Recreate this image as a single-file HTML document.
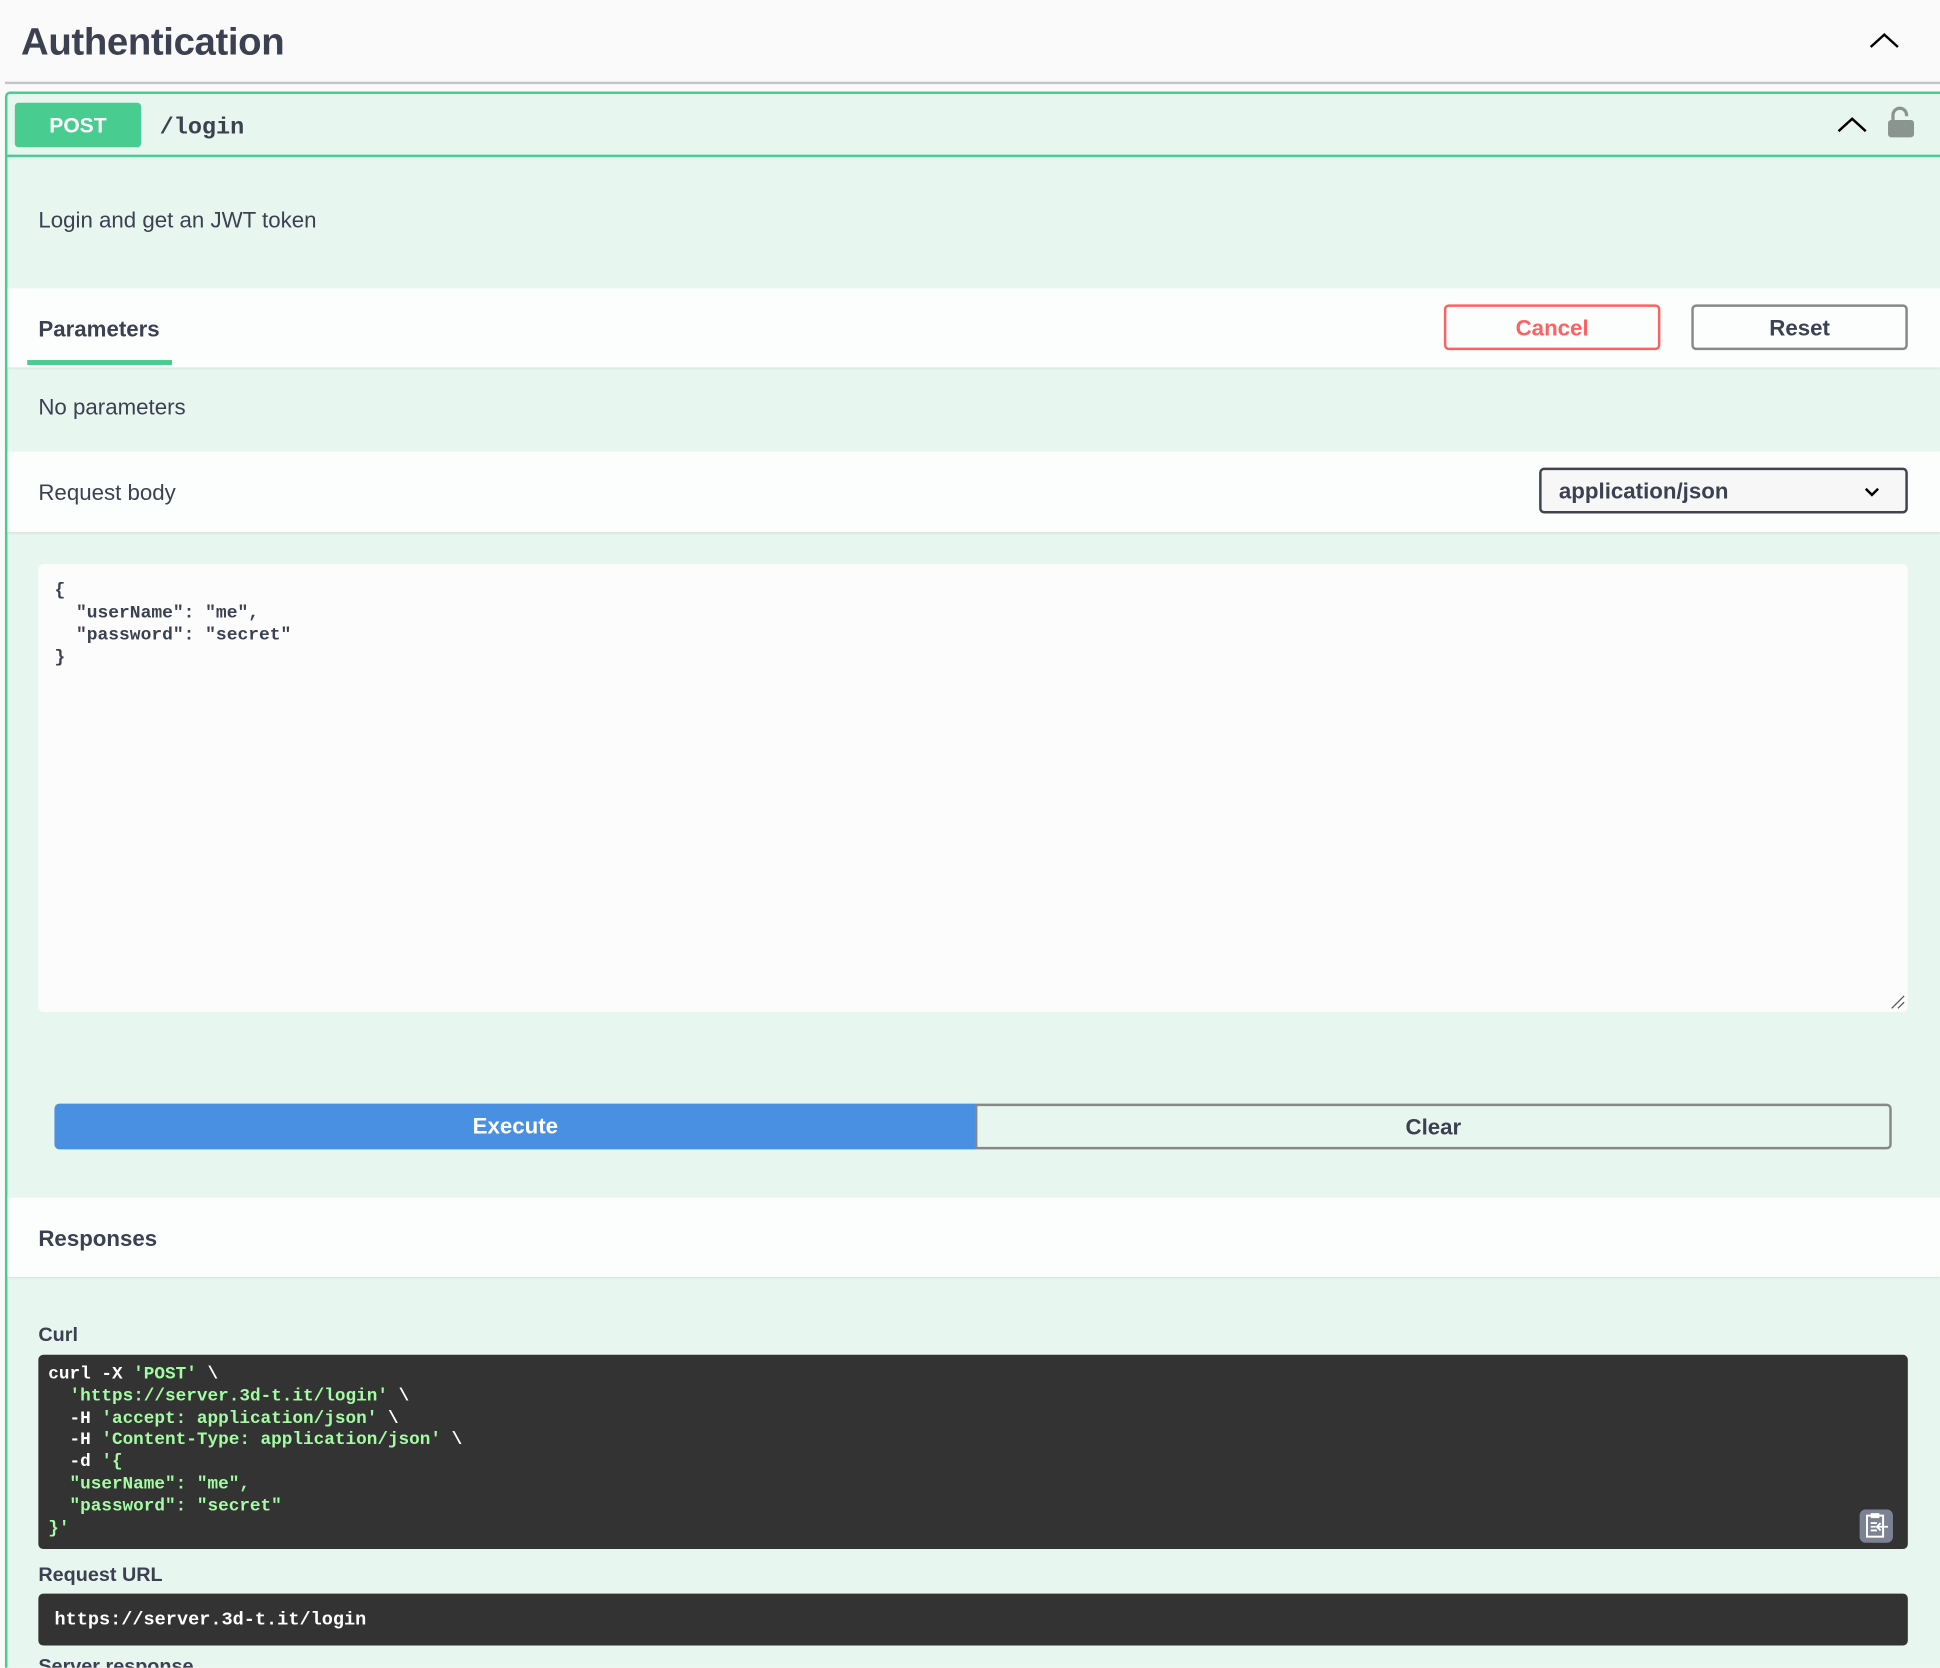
<!DOCTYPE html>
<html><head><meta charset="utf-8"><style>
html,body{margin:0;padding:0;width:1940px;height:1668px;overflow:hidden;background:#fafafa}
#w{position:absolute;left:0;top:0;width:1568px;height:1348px;overflow:hidden;transform:scale(1.23724);transform-origin:0 0;font-family:"Liberation Sans",sans-serif;color:#3b4151}
.a{position:absolute}
.mono{font-family:"Liberation Mono",monospace;font-weight:bold}
</style></head><body><div id="w">
<div class="a" style="left:17px;top:16px;font-size:31px;font-weight:bold;letter-spacing:-0.3px">Authentication</div>
<svg class="a" style="left:1510px;top:25px" width="26" height="16" viewBox="0 0 26 16"><path d="M2 13 L13 3 L24 13" fill="none" stroke="#000" stroke-width="2"/></svg>
<div class="a" style="left:4px;top:66px;width:1564px;height:2px;background:#c6c6ca"></div>

<div class="a" style="left:4px;top:74px;width:1570px;height:1400px;background:#e8f6f0;border:2px solid #49cc90;border-radius:4px;box-sizing:border-box"></div>
<div class="a" style="left:6px;top:125px;width:1562px;height:2px;background:#49cc90"></div>
<div class="a" style="left:12px;top:83px;width:102px;height:36px;background:#49cc90;border-radius:3px;color:#fff;font-weight:bold;font-size:17px;text-align:center;line-height:37px">POST</div>
<div class="a mono" style="left:129px;top:92px;font-size:19px">/login</div>
<svg class="a" style="left:1484px;top:92px" width="26" height="16" viewBox="0 0 26 16"><path d="M2 14 L13 4 L24 14" fill="none" stroke="#000" stroke-width="2"/></svg>
<svg class="a" style="left:1524px;top:86px" width="24" height="26" viewBox="0 0 24 26"><path d="M6 12 V7 a5.5 5.5 0 0 1 11 0 V8" fill="none" stroke="#8b9590" stroke-width="2.6"/><rect x="2" y="11" width="21" height="14" rx="2.5" fill="#8b9590"/></svg>

<div class="a" style="left:31px;top:168px;font-size:18px">Login and get an JWT token</div>

<div class="a" style="left:6px;top:233px;width:1562px;height:64px;background:rgba(255,255,255,.85);box-shadow:0 1px 2px rgba(0,0,0,.1)"></div>
<div class="a" style="left:31px;top:256px;font-size:18px;font-weight:bold">Parameters</div>
<div class="a" style="left:22px;top:291px;width:117px;height:4px;background:#49cc90"></div>
<div class="a" style="left:1167px;top:246px;width:175px;height:37px;border:2px solid #ff6060;border-radius:4px;box-sizing:border-box;color:#ff6060;font-weight:bold;font-size:18px;text-align:center;line-height:35px">Cancel</div>
<div class="a" style="left:1367px;top:246px;width:175px;height:37px;border:2px solid #888;border-radius:4px;box-sizing:border-box;font-weight:bold;font-size:18px;text-align:center;line-height:35px">Reset</div>

<div class="a" style="left:31px;top:319px;font-size:18px">No parameters</div>

<div class="a" style="left:6px;top:365px;width:1562px;height:65px;background:rgba(255,255,255,.85);box-shadow:0 1px 2px rgba(0,0,0,.1)"></div>
<div class="a" style="left:31px;top:388px;font-size:18px">Request body</div>
<div class="a" style="left:1244px;top:378px;width:298px;height:37px;border:2px solid #41444e;border-radius:4px;box-sizing:border-box;background:#f7f7f7;font-weight:bold;font-size:18px;line-height:35px;padding-left:14px">application/json</div>
<svg class="a" style="left:1505px;top:391px" width="16" height="12" viewBox="0 0 16 12"><path d="M3 4 L8 9 L13 4" fill="none" stroke="#000" stroke-width="2"/></svg>

<div class="a" style="left:31px;top:456px;width:1511px;height:362px;background:#fbfcfb;border-radius:4px"></div>
<pre class="a mono" style="left:44px;top:469px;margin:0;font-size:14.5px;line-height:18px;color:#3b4151">{
  "userName": "me",
  "password": "secret"
}</pre>
<svg class="a" style="left:1527px;top:803px" width="13" height="13"><path d="M2 12 L12 2 M7 12 L12 7" stroke="#555" stroke-width="1"/></svg>

<div class="a" style="left:44px;top:892px;width:745px;height:37px;background:#4990e2;border-radius:4px 0 0 4px;color:#fff;font-weight:bold;font-size:18px;text-align:center;line-height:37px">Execute</div>
<div class="a" style="left:788px;top:892px;width:741px;height:37px;border:2px solid #888;border-radius:0 4px 4px 0;box-sizing:border-box;font-weight:bold;font-size:18px;text-align:center;line-height:35px">Clear</div>

<div class="a" style="left:6px;top:968px;width:1562px;height:64px;background:rgba(255,255,255,.85);box-shadow:0 1px 2px rgba(0,0,0,.1)"></div>
<div class="a" style="left:31px;top:991px;font-size:18px;font-weight:bold">Responses</div>

<div class="a" style="left:31px;top:1071px;font-size:16px;font-weight:bold">Curl</div>
<div class="a" style="left:31px;top:1095px;width:1511px;height:157px;background:#333;border-radius:4px"></div>
<pre class="a mono" style="left:39px;top:1103px;margin:0;font-size:14.3px;line-height:17.8px;color:#fff">curl -X <span style="color:#a2fca2">'POST'</span> \
  <span style="color:#a2fca2">'https://server.3d-t.it/login'</span> \
  -H <span style="color:#a2fca2">'accept: application/json'</span> \
  -H <span style="color:#a2fca2">'Content-Type: application/json'</span> \
  -d <span style="color:#a2fca2">'{
  "userName": "me",
  "password": "secret"
}'</span></pre>
<svg class="a" style="left:1503px;top:1220px" width="27" height="27" viewBox="0 0 27 27"><rect width="27" height="27" rx="5" fill="#7d8293"/><rect x="6" y="5" width="13" height="17" fill="none" stroke="#fff" stroke-width="1.6"/><rect x="9" y="3" width="7" height="4" fill="#fff"/><path d="M9 11h5M9 14h4M9 17h5M14 14h9M17 11l-3 3 3 3" stroke="#fff" stroke-width="1.5" fill="none"/></svg>

<div class="a" style="left:31px;top:1265px;font-size:16px;font-weight:bold">Request URL</div>
<div class="a" style="left:31px;top:1288px;width:1511px;height:42px;background:#333;border-radius:4px"></div>
<div class="a mono" style="left:44px;top:1301px;font-size:15px;color:#fff">https://server.3d-t.it/login</div>
<div class="a" style="left:31px;top:1339px;font-size:16px;font-weight:bold">Server response</div>
</div></body></html>
